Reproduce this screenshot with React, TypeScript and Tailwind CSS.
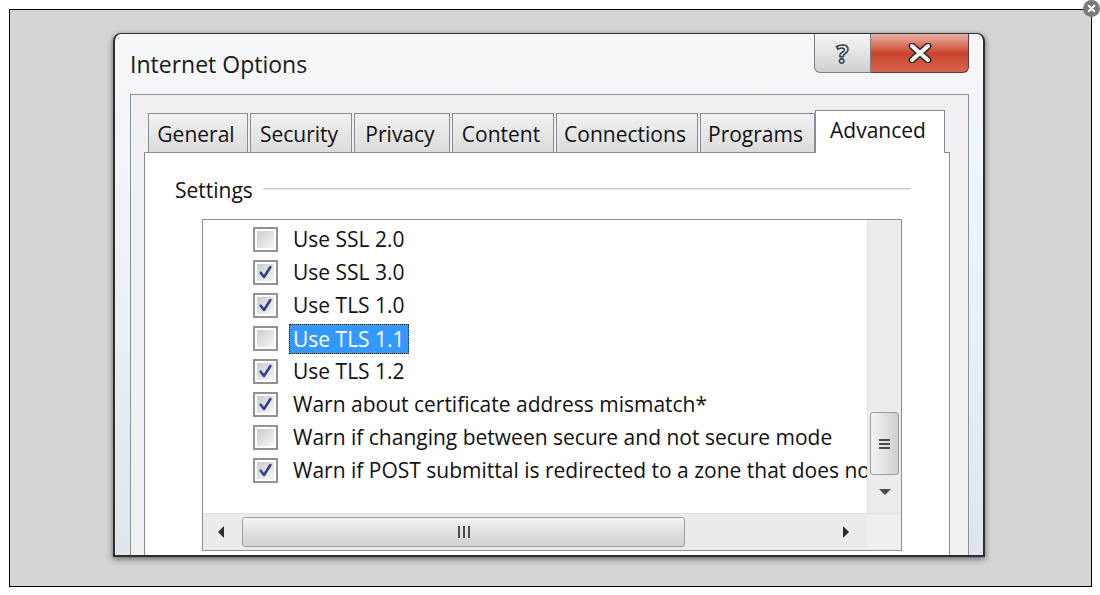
import React from 'react'

const font = { fontFamily: '"Open Sans", "Noto Sans", sans-serif' }

const tabs = [
  { label: 'General', w: 'w-[100px] mr-[2px]' },
  { label: 'Security', w: 'w-[102px] mr-[2px]' },
  { label: 'Privacy', w: 'w-[96px] mr-[2px]' },
  { label: 'Content', w: 'w-[102px] mr-[2px]' },
  { label: 'Connections', w: 'w-[142px] mr-[2px]' },
  { label: 'Programs', w: 'w-[115px]' },
]

const rows = [
  { label: 'Use SSL 2.0', checked: false },
  { label: 'Use SSL 3.0', checked: true },
  { label: 'Use TLS 1.0', checked: true },
  { label: 'Use TLS 1.1', checked: false, selected: true },
  { label: 'Use TLS 1.2', checked: true },
  { label: 'Warn about certificate address mismatch*', checked: true },
  { label: 'Warn if changing between secure and not secure mode', checked: false },
  { label: 'Warn if POST submittal is redirected to a zone that does not permit posts', checked: true },
]

function Checkbox({ checked }: { checked: boolean }) {
  return (
    <div className="w-[25px] h-[25px] shrink-0 border-2 border-[#909294] bg-white p-[2px]">
      <div className="w-full h-full bg-gradient-to-br from-[#c9cbce] to-[#f7f7f7] flex items-center justify-center">
        {checked && (
          <svg width="17" height="17" viewBox="0 0 16 16">
            <path d="M3.5 8.2 L6.6 12.2 L12.6 2.8" fill="none" stroke="#30418a" strokeWidth="2.4" strokeLinecap="round" strokeLinejoin="round" />
          </svg>
        )}
      </div>
    </div>
  )
}

export default function App() {
  return (
    <div className="w-[1100px] h-[595px] bg-white overflow-hidden" style={font}>
      <div className="relative ml-[9px] mt-[9px] w-[1083px] h-[578px] border border-black bg-[#d5d5d5]">
        {/* lightbox close */}
        <div className="absolute -top-[10px] -right-[9px] w-[17px] h-[17px] rounded-full bg-[#7a7a7a] flex items-center justify-center">
          <svg width="9" height="9" viewBox="0 0 10 10">
            <path d="M2 2 L8 8 M8 2 L2 8" stroke="white" strokeWidth="2.4" strokeLinecap="round" />
          </svg>
        </div>

        {/* window */}
        <div className="ml-[103px] mt-[23px] w-[872px] h-[524px] rounded-t-[8px] border-2 border-[#2e2e2e] border-t border-b-[2px] bg-gradient-to-b from-[#f5f7f9] via-[#eef1f4] to-[#dfe5ea] shadow-[0_2px_6px_rgba(0,0,0,0.55)] flex flex-col overflow-hidden">
          {/* title bar */}
          <div className="h-[60px] shrink-0 flex justify-between pl-[15px] pr-[14px]">
            <div className="pt-[12px] text-[23px] leading-[36px] text-[#1a1a1a]">Internet Options</div>
            <div className="flex h-[39px]">
              <div className="w-[57px] h-full rounded-bl-[6px] border border-t-0 border-[#7b7f86] bg-gradient-to-b from-[#f6f6f6] via-[#e4e4e4] to-[#cfcfcf] flex items-center justify-center">
                <span className="text-[25px] font-bold leading-none text-white [-webkit-text-stroke:1.6px_#35404f]">?</span>
              </div>
              <div className="w-[98px] h-full rounded-br-[6px] border border-t-0 border-l-0 border-[#5c3a36] bg-gradient-to-b from-[#e8b2a8] via-[#c8432c] to-[#d9654c] flex items-center justify-center">
                <svg width="26" height="20" viewBox="0 0 26 20">
                  <path d="M5 3 L21 17 M21 3 L5 17" stroke="#3a2e2e" strokeWidth="7" strokeLinecap="round" />
                  <path d="M5 3 L21 17 M21 3 L5 17" stroke="white" strokeWidth="4" strokeLinecap="round" />
                </svg>
              </div>
            </div>
          </div>

          {/* client area */}
          <div className="flex-1 ml-[15px] mr-[14px] border border-[#8c9098] border-b-0 bg-[#f0f0f0] pl-[13px] pr-[18px] pt-[15px] flex flex-col">
            <div className="h-[42px] flex items-end pl-[4px] text-[21px] text-[#111]">
              {tabs.map((t) => (
                <div
                  key={t.label}
                  className={`${t.w} h-[39px] border border-b-0 border-[#898c95] bg-gradient-to-b from-[#f2f2f2] to-[#dcdcdc] flex items-center justify-center pr-[4px] pt-[3px]`}
                >
                  {t.label}
                </div>
              ))}
              <div className="w-[130px] h-[43px] -mb-[1px] relative z-10 border border-b-0 border-[#898c95] bg-white flex items-start justify-center pt-[4px] pr-[4px]">
                Advanced
              </div>
            </div>

            {/* tab panel */}
            <div className="flex-1 border border-b-0 border-[#898c95] bg-white flex flex-col">
              <div className="flex items-center pl-[30px] pr-[38px] pt-[20px] h-[56px]">
                <span className="text-[21px] text-[#111] leading-[30px] -mt-[2px]">Settings</span>
                <div className="flex-1 ml-[10px] -mt-[4px] h-[2px] bg-[#c9c9c9] border-b border-[#e8e8e8]" />
              </div>

              {/* list box */}
              <div className="ml-[57px] mt-[10px] w-[700px] h-[332px] border border-[#8a8f97] flex flex-col">
                <div className="flex h-[293px]">
                  <div className="flex-1 overflow-hidden pt-[3px]">
                    {rows.map((r) => (
                      <div key={r.label} className="h-[33px] flex items-center pl-[50px] whitespace-nowrap text-[21px] text-[#111]">
                        <Checkbox checked={r.checked} />
                        <span
                          className={
                            r.selected
                              ? 'ml-[11px] px-[3px] h-[30px] leading-[28px] bg-[#3399ff] text-white border border-dotted border-[#2a2010]'
                              : 'ml-[15px]'
                          }
                        >
                          {r.label}
                        </span>
                      </div>
                    ))}
                  </div>
                  {/* vertical scrollbar */}
                  <div className="w-[34px] bg-[#ececec] border-l border-[#e2e2e2] flex flex-col items-center">
                    <div className="mt-[192px] w-[29px] h-[63px] rounded-[3px] border border-[#9a9ea4] bg-gradient-to-r from-[#f4f4f4] via-[#e2e2e2] to-[#cfcfcf] flex flex-col items-start pl-[8px] justify-center gap-[2px]">
                      <div className="w-[11px] h-[2px] bg-[#4d4d4d]" />
                      <div className="w-[11px] h-[2px] bg-[#4d4d4d]" />
                      <div className="w-[11px] h-[2px] bg-[#4d4d4d]" />
                    </div>
                    <svg className="mt-[13px]" width="14" height="8" viewBox="0 0 14 8">
                      <path d="M1 1 L13 1 L7 7 Z" fill="#4a4a4a" />
                    </svg>
                  </div>
                </div>
                {/* horizontal scrollbar */}
                <div className="flex-1 flex bg-[#ebebeb] border-t border-[#e0e0e0]">
                  <div className="flex-1 flex items-center">
                    <svg className="ml-[14px]" width="8" height="14" viewBox="0 0 8 14">
                      <path d="M7 1 L7 13 L1 7 Z" fill="#2e2e2e" />
                    </svg>
                    <div className="ml-[17px] w-[443px] h-[30px] rounded-[3px] border border-[#9a9ea4] bg-gradient-to-b from-[#f6f6f6] via-[#e0e0e0] to-[#d2d2d2] flex items-center justify-center gap-[3px]">
                      <div className="w-[2px] h-[12px] bg-[#4d4d4d]" />
                      <div className="w-[2px] h-[12px] bg-[#4d4d4d]" />
                      <div className="w-[2px] h-[12px] bg-[#4d4d4d]" />
                    </div>
                    <svg className="ml-[157px]" width="8" height="14" viewBox="0 0 8 14">
                      <path d="M1 1 L1 13 L7 7 Z" fill="#2e2e2e" />
                    </svg>
                  </div>
                  <div className="w-[34px] bg-[#efefef]" />
                </div>
              </div>
            </div>
          </div>
        </div>
      </div>
    </div>
  )
}
